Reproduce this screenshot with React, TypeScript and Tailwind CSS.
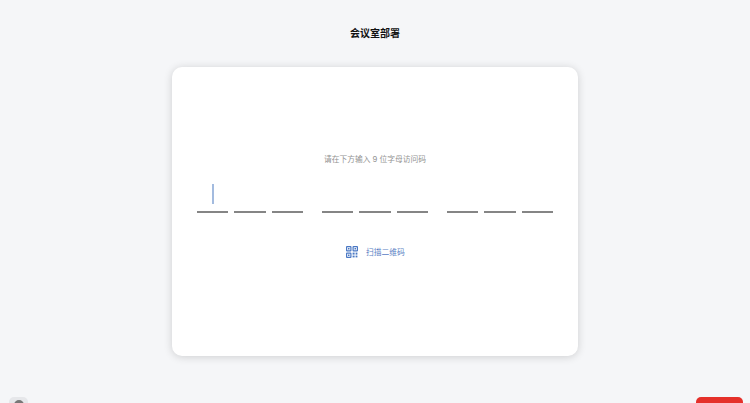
import React from 'react';

const font = { cjk: "font-['Inter','Noto_Sans_CJK_SC',sans-serif]" };

const groups = [
  [0, 1, 2],
  [3, 4, 5],
  [6, 7, 8],
];

const CodeCell: React.FC<{ active?: boolean }> = ({ active }) => (
  <div className="flex h-[30px] w-[31.25px] items-start justify-center border-b-2 border-[#858585]">
    {active && <div className="mt-[1px] h-[20px] w-[2px] bg-[#a3bbdf]" />}
  </div>
);

const QrIcon = () => (
  <svg width="12" height="12" viewBox="0 0 12 12" fill="none" stroke="#4a78c4" strokeWidth="1.2">
    <rect x="0.6" y="0.6" width="4.3" height="4.3" rx="0.4" />
    <rect x="7.1" y="0.6" width="4.3" height="4.3" rx="0.4" />
    <rect x="0.6" y="7.1" width="4.3" height="4.3" rx="0.4" />
    <rect x="2" y="2" width="1.5" height="1.5" fill="#4a78c4" stroke="none" />
    <rect x="8.5" y="2" width="1.5" height="1.5" fill="#4a78c4" stroke="none" />
    <rect x="2" y="8.5" width="1.5" height="1.5" fill="#4a78c4" stroke="none" />
    <rect x="6.6" y="6.6" width="2" height="2" fill="#4a78c4" stroke="none" />
    <rect x="9.6" y="6.6" width="1.8" height="2" fill="#4a78c4" stroke="none" />
    <rect x="6.6" y="9.6" width="2" height="1.8" fill="#4a78c4" stroke="none" />
    <rect x="9.6" y="9.6" width="1.8" height="1.8" fill="#4a78c4" stroke="none" />
  </svg>
);

export default function App() {
  return (
    <div className={`flex h-[403px] flex-col items-center overflow-hidden bg-[#f5f6f8] ${font.cjk}`}>
      <h1 className="mt-[26px] h-[14px] shrink-0 text-[10px] leading-[14px] font-bold text-[#111]">会议室部署</h1>

      <div className="mt-[27px] flex h-[289px] w-[406px] shrink-0 flex-col items-center rounded-[10px] bg-white shadow-[0_1px_8px_rgba(0,0,0,0.16)]">
        <p className="mt-[86px] h-[12px] text-[7.75px] leading-[12px] text-[#929292]">请在下方输入 9 位字母访问码</p>

        <div className="mt-[18px] flex gap-[18.75px]">
          {groups.map((group) => (
            <div key={group[0]} className="flex gap-[6.25px]">
              {group.map((i) => (
                <CodeCell key={i} active={i === 0} />
              ))}
            </div>
          ))}
        </div>

        <div className="mt-[33px] ml-[1px] flex items-center gap-[8px]">
          <QrIcon />
          <span className="text-[7.75px] leading-[12px] text-[#5a80c4]">扫描二维码</span>
        </div>
      </div>

      <div className="mt-[41px] flex w-full shrink-0 items-start justify-between pr-[7px] pl-[9px]">
        <div className="flex h-[24px] w-[19px] justify-center rounded-[5px] bg-[#e6e7ea] pt-[3px]">
          <div className="h-[10px] w-[10px] rounded-full bg-[#777]" />
        </div>
        <div className="h-[24px] w-[47px] rounded-[5px] bg-[#e5302a]" />
      </div>
    </div>
  );
}
